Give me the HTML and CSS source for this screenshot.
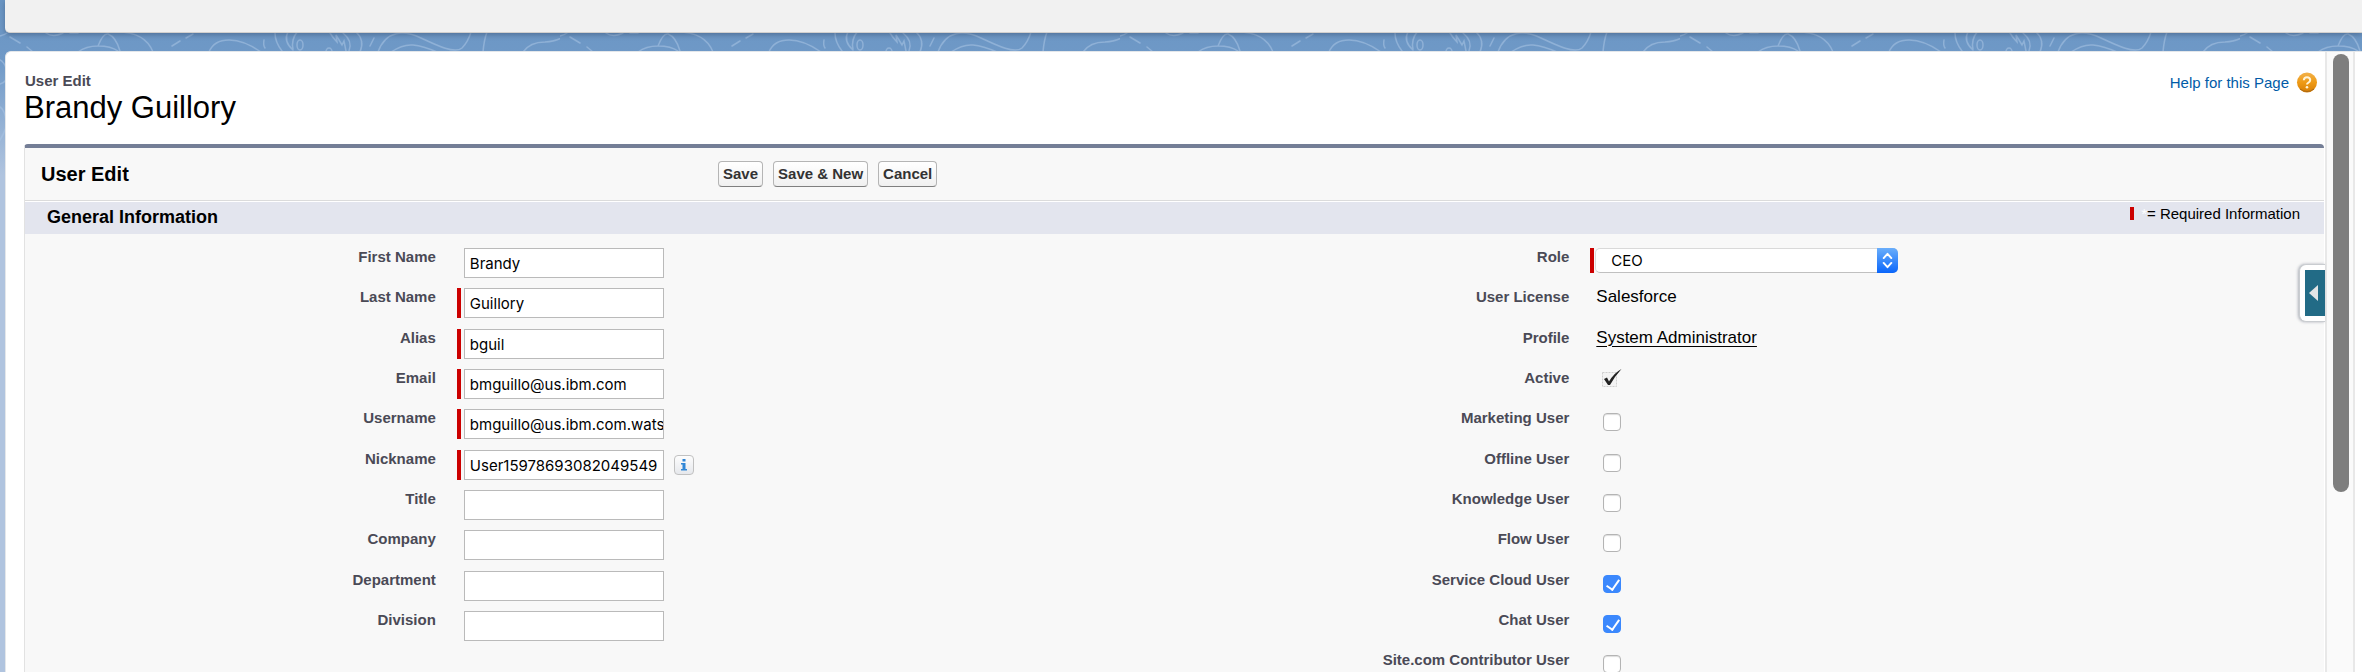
FILE: index.html
```html
<!DOCTYPE html>
<html lang="en">
<head>
<meta charset="utf-8">
<title>User Edit: Brandy Guillory</title>
<link rel="stylesheet" href="styles.css">
</head>
<body>
<svg class="backdrop" aria-hidden="true">
  <defs>
    <pattern id="topo" width="560" height="180" patternUnits="userSpaceOnUse">
      <g fill="none" stroke="#a9c4e4" stroke-width="1.5" stroke-linecap="round" opacity=".55">
        <path d="M-6 37Q3 36 7 33M10 37l10 6M27 47l6 5M46 33q7 5 17 0M70 33h8M98 46q5-13 10-12q8 3 12 17M78 52q8-6 20-6q13 0 20 5M118 32q27 0 35 20"/>
        <path d="M172 46l8-5M186 38l7-4M209 52q5-12 20-12t32 12M264 40q-1 5 1 8M275 33q0 9 7 18M288 32q-5 9 5 18M297 32q-6 8-4 17M330 33q3 5 7 9l-1-7l6 10l2-4l2 10M343 33q10 8 6 18M356 32q9 8 4 20M374 38l-4 8"/>
        <ellipse cx="300" cy="45" rx="3" ry="5"/><ellipse cx="329" cy="52" rx="3" ry="4"/>
        <path d="M378 52C386 30 404 30 421 38S455 54 462 48Q468 42 471 32M391 52q12-8 22-7t24 7M487 32q-3 8-4 20M523 52q7-10 22-10q16-1 22-9"/>
        <path d="M0 60q4 2 6 8M0 84q4-1 6-4M0 107q5 3 6 14M0 140q4-6 6-13"/>
      </g>
    </pattern>
  </defs>
  <rect width="100%" height="150" fill="url(#topo)"/>
</svg>
<header class="topbar"></header>
<main class="window">
  <div class="page">
    <div class="page-head">
      <div>
        <p class="kind">User Edit</p>
        <h1>Brandy Guillory</h1>
      </div>
      <a class="help" href="#help">Help for this Page
        <svg width="22" height="22" viewBox="0 0 22 22" aria-hidden="true">
          <defs><linearGradient id="amber" x2="0" y2="1"><stop stop-color="#f2b14a"/><stop offset=".5" stop-color="#ee9a16"/><stop offset="1" stop-color="#d87e05"/></linearGradient></defs>
          <circle cx="11" cy="10.500" r="10" fill="url(#amber)"/>
          <path d="M4 17q7 5 14 0" fill="none" stroke="#a96a16"/>
          <path d="M7.800 8.200q.2-3 3.200-3t3.200 2.700q0 1.600-1.600 2.600t-1.600 2" fill="none" stroke="#fff4d8" stroke-width="2"/>
          <circle cx="11" cy="15.200" r="1.300" fill="#fff4d8"/>
        </svg>
      </a>
    </div>
    <form class="card">
      <div class="card-head">
        <h2>User Edit</h2>
        <div class="actions">
          <button type="button">Save</button>
          <button type="button">Save &amp; New</button>
          <button type="button">Cancel</button>
        </div>
      </div>
      <div class="band">
        <h3>General Information</h3>
        <p class="legend"><span class="mark"></span><span class="star">*</span>= Required Information</p>
      </div>
      <div class="columns">
        <div class="fields left">
          <label for="first">First Name</label><div class="cell"><input class="text" id="first" value="Brandy"></div>
          <label for="last">Last Name</label><div class="cell required"><input class="text" id="last" value="Guillory"></div>
          <label for="alias">Alias</label><div class="cell required"><input class="text" id="alias" value="bguil"></div>
          <label for="email">Email</label><div class="cell required"><input class="text" id="email" value="bmguillo@us.ibm.com"></div>
          <label for="username">Username</label><div class="cell required"><input class="text" id="username" value="bmguillo@us.ibm.com.wats"></div>
          <label for="nick">Nickname</label><div class="cell required"><input class="text" id="nick" value="User15978693082049549"><button class="info" type="button" aria-label="Nickname information"><svg width="8" height="12" viewBox="0 0 8 12" aria-hidden="true"><path d="M2.500 0h3v2.500h-3zM1 4h4.500v6H7v1.500H1V10h1.500V5.500H1z" fill="#2f86d6"/></svg></button></div>
          <label for="title">Title</label><div class="cell"><input class="text" id="title"></div>
          <label for="company">Company</label><div class="cell"><input class="text" id="company"></div>
          <label for="dept">Department</label><div class="cell"><input class="text" id="dept"></div>
          <label for="division">Division</label><div class="cell"><input class="text" id="division"></div>
        </div>
        <div class="fields right">
          <label for="role">Role</label>
          <div class="cell required role"><span class="select"><select id="role"><option>CEO</option></select><svg class="chevrons" viewBox="0 0 20 26" aria-hidden="true"><path d="M6 10.500l4-4.500l4 4.500M6 15.500l4 4.500l4-4.500" fill="none" stroke="#fff" stroke-width="2" stroke-linecap="round" stroke-linejoin="round"/></svg></span></div>
          <span class="name">User License</span><div class="cell value">Salesforce</div>
          <span class="name">Profile</span><div class="cell value"><a href="#profile">System Administrator</a></div>
          <span class="name">Active</span>
          <div class="cell active"><svg width="22" height="20" viewBox="0 0 22 20" role="img" aria-label="Checked"><path d="M1.500 3.500h14v14h-14z" fill="#f3f3f3" stroke="#cfcfcf" stroke-dasharray="2 1"/><path d="M3 10l3-1.500l2 4Q13 4 20.500 0Q14 7 9 16H7z" fill="#222"/></svg></div>
          <label for="marketing">Marketing User</label><div class="cell"><input class="check" type="checkbox" id="marketing"></div>
          <label for="offline">Offline User</label><div class="cell"><input class="check" type="checkbox" id="offline"></div>
          <label for="knowledge">Knowledge User</label><div class="cell"><input class="check" type="checkbox" id="knowledge"></div>
          <label for="flow">Flow User</label><div class="cell"><input class="check" type="checkbox" id="flow"></div>
          <label for="service">Service Cloud User</label><div class="cell"><input class="check" type="checkbox" id="service" checked></div>
          <label for="chat">Chat User</label><div class="cell"><input class="check" type="checkbox" id="chat" checked></div>
          <label for="site">Site.com Contributor User</label><div class="cell"><input class="check" type="checkbox" id="site"></div>
        </div>
      </div>
    </form>
    <button class="drawer" type="button" aria-label="Open side panel"><span><svg width="10" height="18" viewBox="0 0 10 18" aria-hidden="true"><path d="M9 1v16L0 9z" fill="#e3e5e6"/></svg></span></button>
  </div>
  <div class="track"><div class="thumb"></div></div>
</main>
</body>
</html>
```
FILE: styles.css
```css
* {
  box-sizing: border-box;
}

body {
  margin: 0;
  height: 100vh;
  overflow: hidden;
  display: flex;
  flex-direction: column;
  gap: 18px;
  padding-left: 5px;
  background: linear-gradient(#6a95c3 0, #6f99c7 60px, #b0c4df 175px);
  font-family: "Liberation Sans", Arial, sans-serif;
  font-size: 15px;
  line-height: 18px;
  color: #000;
}

h1, h2, h3, p {
  margin: 0;
}

.backdrop {
  position: absolute;
  top: 0;
  left: 0;
  width: 100%;
  height: 150px;
}

.topbar {
  position: relative;
  flex: none;
  height: 33px;
  background: #f1f1f1;
  border-bottom: 1px solid #d2d0ce;
  border-radius: 0 0 0 5px;
  box-shadow: 0 2px 5px rgba(40, 60, 90, .4);
}

.window {
  position: relative;
  flex: 1;
  min-height: 0;
  display: flex;
  padding-right: 7px;
  background: #fff;
  border-top: 1px solid #e4e7ea;
  border-left: 1px solid #e4e7ea;
  border-radius: 6px 0 0 0;
  overflow: hidden;
}

.page {
  position: relative;
  flex: 1;
  padding: 20px 1px 0 18px;
}

.page-head {
  display: flex;
  justify-content: space-between;
  align-items: flex-start;
  height: 72px;
}

.kind {
  padding-left: 1px;
  font-weight: bold;
  color: #4a4a56;
}

h1 {
  font-size: 31px;
  line-height: 36px;
  font-weight: normal;
}

.help {
  display: flex;
  align-items: center;
  gap: 7px;
  margin-right: 6px;
  color: #015ba7;
  text-decoration: none;
}

.card {
  border-top: 4px solid #747e96;
  border-left: 1px solid #e2e2e2;
  border-radius: 4px 4px 0 0;
  background: #f8f8f8;
}

.card-head {
  display: grid;
  grid-template-columns: 693fr 1606fr;
  align-items: center;
  height: 53px;
  padding-bottom: 1px;
  border-bottom: 1px solid #dbdbdb;
}

.card-head h2 {
  padding-left: 16px;
  font-size: 20px;
}

.actions {
  display: flex;
  gap: 10px;
}

.actions button {
  height: 26px;
  padding: 0 4px;
  border: 1px solid #b5b5b5;
  border-bottom-color: #7f7f7f;
  border-radius: 4px;
  background: linear-gradient(#fff, #f0f0f0);
  font: bold 15px "Liberation Sans", Arial, sans-serif;
  color: #333;
}

.band {
  display: flex;
  justify-content: space-between;
  height: 33px;
  padding: 5px 24px 0 22px;
  border-top: 1px solid #fff;
  background: #e3e5ee;
}

.band h3 {
  font-size: 18px;
  line-height: 20px;
}

.legend {
  display: flex;
  line-height: 13px;
}

.mark {
  width: 4px;
  height: 13px;
  margin-right: 7px;
  background: #c00;
}

.star {
  color: #fff;
}

.columns {
  display: grid;
  grid-template-columns: 1fr 1fr;
  padding-top: 14px;
}

.fields {
  display: grid;
  grid-auto-rows: 40px 41px 40px;
  column-gap: 21px;
  align-items: start;
}

.left {
  grid-template-columns: 411fr 718fr;
}

.right {
  grid-template-columns: 395fr 734fr;
}

.fields label,
.name {
  text-align: right;
  font-weight: bold;
  color: #4a4a56;
}

.cell {
  display: flex;
  align-items: center;
  padding-left: 7px;
}

.required {
  padding-left: 3px;
  border-left: 4px solid #c00;
}

.text {
  width: 200px;
  height: 30px;
  padding: 0 0 0 5px;
  border: 1px solid #bababa;
  border-radius: 0;
  background: #fff;
  font: 15px Inter, sans-serif;
  color: #000;
}

.info {
  display: flex;
  align-items: center;
  justify-content: center;
  width: 20px;
  height: 20px;
  margin-left: 10px;
  padding: 0;
  border: 1px solid #c1c1c1;
  border-radius: 4px;
  background: linear-gradient(#fdfdfd, #e6e8ec);
}

.role {
  padding-left: 1px;
}

.select {
  position: relative;
  display: flex;
}

select {
  appearance: none;
  width: 303px;
  height: 25px;
  padding: 0 15px;
  border: 1px solid #d9d9d9;
  border-bottom-color: #c0c0c0;
  border-radius: 5px;
  background: #fff;
  font: 15px Inter, sans-serif;
  color: #000;
}

.chevrons {
  position: absolute;
  top: 0;
  right: 0;
  width: 21px;
  height: 25px;
  border-radius: 0 5px 5px 0;
  background: linear-gradient(#6aaefb, #0a66fb);
  pointer-events: none;
}

.value {
  padding-left: 6px;
  font-size: 17px;
}

.value a {
  color: #000;
  text-underline-offset: 3px;
}

.active {
  padding-left: 11px;
}

.check {
  appearance: none;
  width: 18px;
  height: 18px;
  margin: 4px 6px;
  border: 1px solid #b4b4b4;
  border-radius: 4px;
  background: #fff;
  box-shadow: inset 0 1px 1px #ddd;
}

.check:checked {
  border-color: #3b88fd;
  background: #3b88fd;
  box-shadow: none;
}

.check:checked::after {
  content: "";
  display: block;
  width: 6px;
  height: 11px;
  margin: 1px 0 0 5px;
  border: solid #fff;
  border-width: 0 2px 2px 0;
  transform: rotate(35deg);
}

.drawer {
  position: absolute;
  top: 212px;
  right: 0;
  width: 26px;
  height: 58px;
  padding: 5px 0 5px 5px;
  border: 1px solid #c9ccd0;
  border-right: 0;
  border-radius: 7px 0 0 7px;
  background: #fff;
  box-shadow: -1px 0 3px rgba(60, 70, 90, .4);
}

.drawer span {
  display: flex;
  align-items: center;
  height: 100%;
  padding-left: 4px;
  background: #226b86;
}

.track {
  flex: none;
  width: 30px;
  padding: 2px 4px 0 6px;
  border: solid #e8e8e8;
  border-width: 0 2px;
  background: #fafafa;
}

.thumb {
  height: 438px;
  border-radius: 8px;
  background: #7e7e7e;
}
```
